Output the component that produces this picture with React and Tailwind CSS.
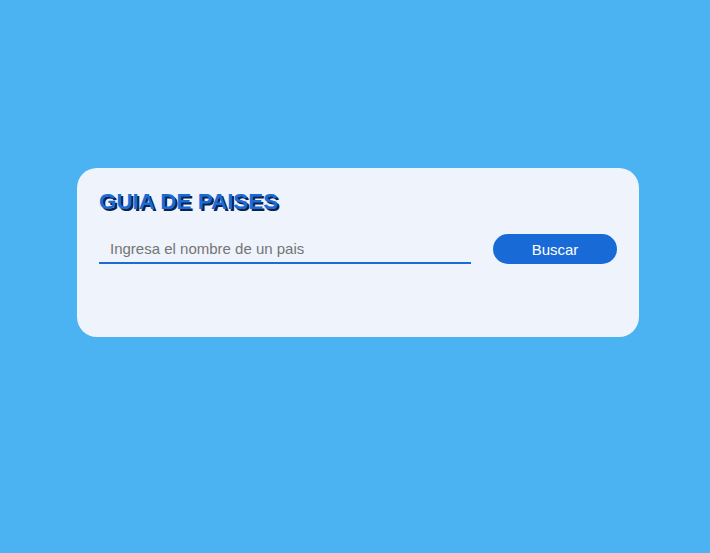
export default function App() {
  return (
    <div className="min-h-[553px] w-full bg-[#4cb3f2] pt-[168px] pl-[77px]" style={{ fontFamily: '"Liberation Sans", Arial, sans-serif' }}>
      <div className="w-[562px] h-[169px] rounded-[20px] bg-[#eff3fb] pl-[22px] pr-[22px] pt-[20px]">
        <h1 className="text-[22.4px] leading-[28px] font-bold text-[#1a6bd6]" style={{ textShadow: '2px 2px 0 #0c2350' }}>
          GUIA DE PAISES
        </h1>
        <div className="mt-[18px] flex items-center gap-[22px]">
          <input
            type="text"
            placeholder="Ingresa el nombre de un pais"
            className="w-[372px] h-[30px] bg-transparent border-b-2 border-[#1a6bd6] px-[11px] pt-[1px] text-[15px] text-[#333] placeholder:text-[#757575] outline-none"
          />
          <button className="w-[124px] h-[30px] rounded-full bg-[#186bd6] text-white text-[15px] leading-none">
            Buscar
          </button>
        </div>
      </div>
    </div>
  );
}
